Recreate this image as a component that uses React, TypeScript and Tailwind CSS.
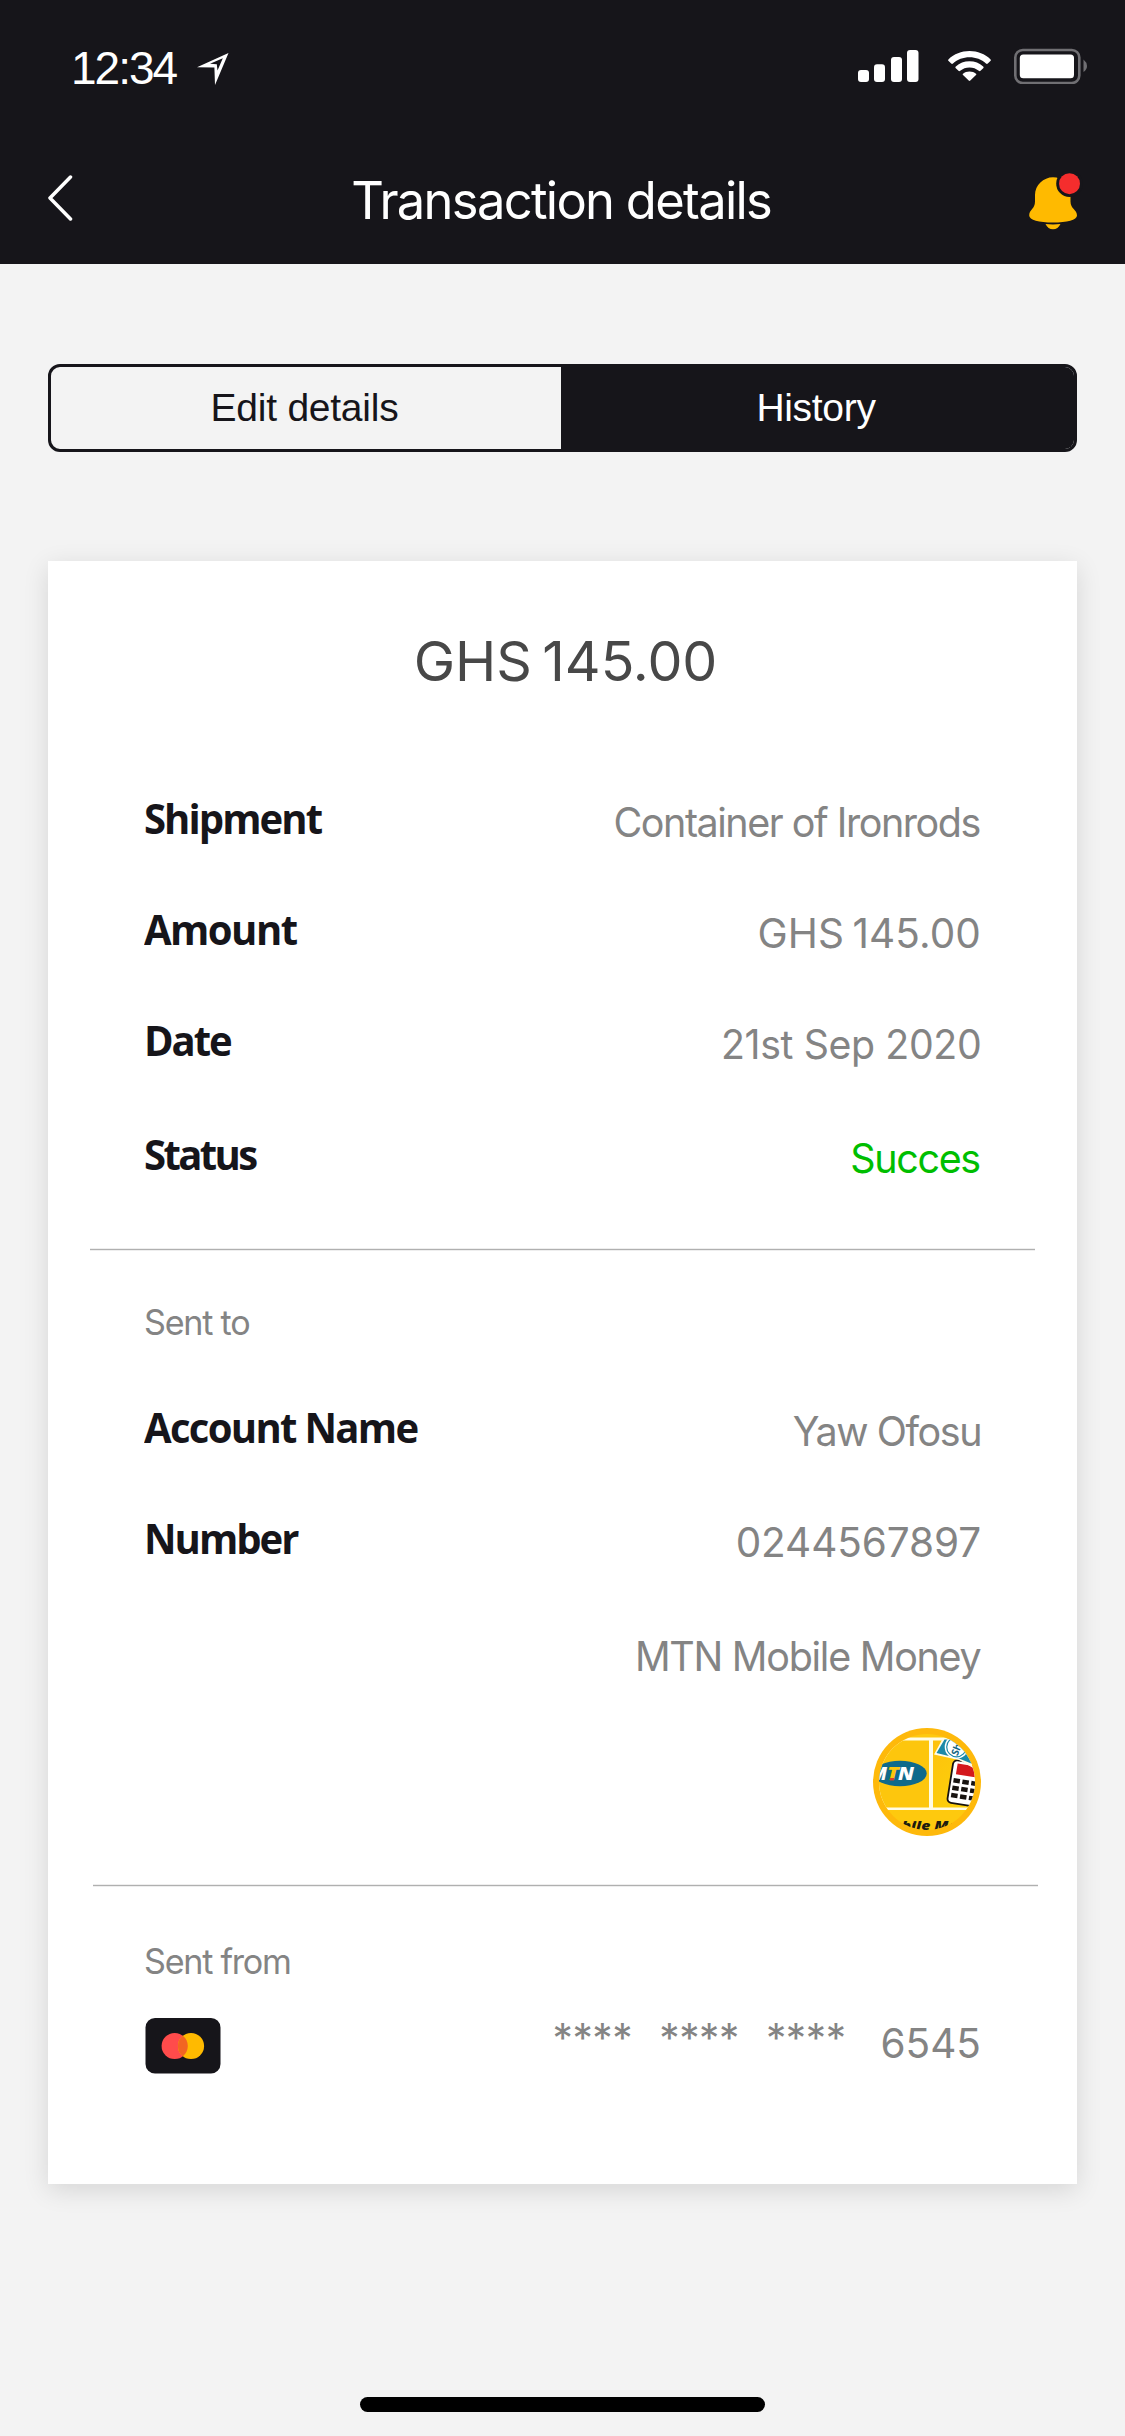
import React from "react";

type RowProps = {
  label?: string;
  value: string;
  labelClass?: string;
  valueClass?: string;
  className?: string;
};

function Row({ label = "", value, labelClass = "", valueClass = "", className = "" }: RowProps) {
  return (
    <div className={`flex h-[52px] items-start justify-between whitespace-nowrap ${className}`}>
      <span className={`origin-left scale-x-[0.97] font-['Open_Sans','Noto_Sans',sans-serif] text-[41.3px] leading-[49px] font-bold text-[#16151a] ${labelClass}`}>
        {label}
      </span>
      <span className={`mt-[5px] origin-right text-[40.5px] leading-[48px] ${valueClass}`}>{value}</span>
    </div>
  );
}

function LocationIcon() {
  return (
    <svg className="mt-3 ml-[21px] h-8 w-8" viewBox="0 0 32 32">
      <path d="M0 14.2 L31.5 0 L18 32 L17.4 14.6 Z" fill="#fff" />
      <path d="M13 10.8 L25.8 5.3 L20.5 17.5 L19.8 11.2 Z" fill="#16151a" />
    </svg>
  );
}

function SignalIcon() {
  return (
    <svg className="h-8 w-[61px]" viewBox="0 0 61 32" fill="#fff">
      <rect x="0" y="20" width="11" height="12" rx="3" />
      <rect x="16" y="14.3" width="11" height="17.7" rx="3" />
      <rect x="33" y="7" width="11" height="25" rx="3" />
      <rect x="49" y="0" width="11.5" height="32" rx="3" />
    </svg>
  );
}

function WifiIcon() {
  return (
    <svg className="h-[30px] w-[43px]" viewBox="0 0 43 30" fill="#fff">
      <path d="M21.5 0 C29.6 0 37 3 42.4 8.2 C43 8.8 43 9.5 42.4 10.1 L39.8 12.6 C39.2 13.2 38.6 13.1 38 12.6 C33.6 8.5 27.8 6.3 21.5 6.3 C15.2 6.3 9.4 8.5 5 12.6 C4.4 13.1 3.8 13.2 3.2 12.6 L.6 10.1 C0 9.5 0 8.8 .6 8.2 C6 3 13.4 0 21.5 0Z" />
      <path d="M21.5 10.2 C26.8 10.2 31.5 12.1 35.2 15.4 C35.8 16 35.8 16.6 35.2 17.2 L32.5 19.8 C31.9 20.4 31.4 20.3 30.8 19.8 C28.2 17.6 25 16.4 21.5 16.4 C18 16.4 14.8 17.6 12.2 19.8 C11.6 20.3 11.1 20.4 10.5 19.8 L7.8 17.2 C7.2 16.6 7.2 16 7.8 15.4 C11.5 12.1 16.2 10.2 21.5 10.2Z" />
      <path d="M21.5 20.5 C24 20.5 26.3 21.3 28 22.7 C28.5 23.1 28.5 23.5 28 24 L22.3 29.6 C21.7 30.1 21.3 30.1 20.7 29.6 L15 24 C14.5 23.5 14.5 23.1 15 22.7 C16.7 21.3 19 20.5 21.5 20.5Z" />
    </svg>
  );
}

function BatteryIcon() {
  return (
    <svg className="-mt-[2px] h-9 w-[73px]" viewBox="0 0 73 36">
      <rect x="1.3" y="2" width="64" height="33" rx="7.5" fill="none" stroke="#706f73" strokeWidth="2.6" />
      <rect x="5.8" y="6.5" width="54.2" height="23.8" rx="3.5" fill="#fff" />
      <path d="M69.5 11.5 Q73 14.5 73 17.9 Q73 21.3 69.5 24 Z" fill="#706f73" />
    </svg>
  );
}

function BellIcon() {
  return (
    <svg className="h-[62px] w-[56px]" viewBox="0 0 56 62">
      <path d="M24 9.2 C33.2 9.2 41.5 17 41.5 27 V33.5 C41.5 41 48 41.5 48 47.5 C48 52 38 54.5 24 54.5 C10 54.5 .2 52 .2 47.5 C.2 41.5 6 41 6 33.5 V27 C6 17 14.5 9.2 24 9.2Z" fill="#ffba00" />
      <path d="M16.5 56 Q24 56.9 31.5 56 C29.8 59.6 27.4 61.3 24 61.3 C20.6 61.3 18.2 59.6 16.5 56Z" fill="#ffba00" />
      <circle cx="40.5" cy="15.7" r="13.3" fill="#16151a" />
      <circle cx="40.5" cy="15.7" r="10.5" fill="#f52d2d" />
    </svg>
  );
}

function MtnLogo() {
  return (
    <svg className="h-[108px] w-[108px]" viewBox="0 0 108 108">
      <defs>
        <clipPath id="mtn-clip">
          <circle cx="54" cy="54" r="48" />
        </clipPath>
        <linearGradient id="mtn-gold" x1="0" y1="0" x2="1" y2="1">
          <stop offset="0" stopColor="#fdc20c" />
          <stop offset="1" stopColor="#fdd40a" />
        </linearGradient>
      </defs>
      <circle cx="54" cy="54" r="54" fill="#feb90b" />
      <g clipPath="url(#mtn-clip)">
        <rect width="108" height="108" fill="#fec90e" />
        <rect x="0" y="9.5" width="108" height="72.5" fill="#fffce6" />
        <rect x="0" y="12.5" width="56" height="67" fill="#fdc60d" />
        <rect x="60" y="12.5" width="48" height="67" fill="url(#mtn-gold)" />
        <ellipse cx="27" cy="45.5" rx="26.7" ry="12.8" fill="#0f6a8b" />
        <g fontFamily="'Open Sans', sans-serif" fontWeight="800" fontStyle="italic" fontSize="17">
          <text x="-2" y="51.7" fill="#fff" textLength="16" lengthAdjust="spacingAndGlyphs">M</text>
          <text x="14" y="51.7" fill="#fdc60d" textLength="12" lengthAdjust="spacingAndGlyphs">T</text>
          <text x="25" y="51.7" fill="#fff" textLength="16" lengthAdjust="spacingAndGlyphs">N</text>
        </g>
        <path d="M17 50 h4 v2.5 h-4z" fill="#d8402a" />
        <g transform="translate(82 33) rotate(9)">
          <rect x="-1.5" y="-1" width="34" height="43" rx="4" fill="#fff" stroke="#171310" strokeWidth="1.8" />
          <rect x="3" y="2" width="28" height="11" fill="#d4181c" />
          <g fill="#171310">
            <rect x="1.5" y="17" width="6.5" height="4.5" />
            <rect x="10.5" y="17" width="6.5" height="4.5" />
            <rect x="19.5" y="17" width="6.5" height="4.5" />
            <rect x="1.5" y="24.5" width="6.5" height="4.5" />
            <rect x="10.5" y="24.5" width="6.5" height="4.5" />
            <rect x="19.5" y="24.5" width="6.5" height="4.5" />
            <rect x="1.5" y="32" width="6.5" height="4.5" />
            <rect x="10.5" y="32" width="6.5" height="4.5" />
            <rect x="19.5" y="32" width="6.5" height="4.5" />
          </g>
        </g>
        <path d="M61 26.5 L70 10 L100 16 L104 42 L86 32 Z" fill="#fffce6" />
        <path d="M63.5 25 L71.5 11.5 L92 12 L102 37 L86 30.5 Z" fill="#1b89a8" />
        <circle cx="83.5" cy="19" r="11.8" fill="#fff" />
        <circle cx="83.5" cy="19" r="9.8" fill="none" stroke="#1b89a8" strokeWidth="1.2" />
        <text x="-6" y="4.5" transform="translate(82.5 21) rotate(-68)" fontFamily="'Open Sans', sans-serif" fontWeight="700" fontSize="10" fill="#12657f">Sh</text>
        <text x="19" y="101.5" fontFamily="'Open Sans', sans-serif" fontWeight="800" fontStyle="italic" fontSize="12.5" fill="#1d1a10" textLength="66" lengthAdjust="spacingAndGlyphs">obile Mo</text>
      </g>
    </svg>
  );
}

function CardIcon() {
  return (
    <svg className="ml-[1px] h-14 w-[76px]" viewBox="0 0 76 56">
      <rect x=".5" y="0" width="75" height="55.6" rx="9.5" fill="#16151a" />
      <circle cx="29.7" cy="28" r="13.1" fill="#ff4b4b" />
      <circle cx="46" cy="28" r="13.1" fill="#ffba00" />
      <path d="M37.85 17.75 A13.1 13.1 0 0 1 37.85 38.25 A13.1 13.1 0 0 1 37.85 17.75Z" fill="#f26522" />
    </svg>
  );
}

export default function App() {
  return (
    <div className="flex h-[2436px] w-[1125px] flex-col bg-[#f3f3f3] font-[Inter,sans-serif]">
      <header className="h-[264px] bg-[#16151a] text-white">
        <div className="flex h-[168px] items-start justify-between pt-[41px] pr-[38px] pl-[71px]">
          <div className="flex items-start">
            <span className="font-['Liberation_Sans',sans-serif] text-[46px] leading-[54px] tracking-[-2px]">12:34</span>
            <LocationIcon />
          </div>
          <div className="mt-[9px] flex items-start gap-[29px]">
            <SignalIcon />
            <div className="mt-px mr-[-6px] flex">
              <WifiIcon />
            </div>
            <BatteryIcon />
          </div>
        </div>
        <div className="flex items-start pr-10 pl-12">
          <svg className="mt-[7px] h-[46px] w-[25px]" viewBox="0 0 25 46" fill="none" stroke="#fff" strokeWidth="3.5" strokeLinecap="round" strokeLinejoin="round">
            <path d="M22.5 2 L2 23 L22.5 44" />
          </svg>
          <h1 className="mt-px flex-1 scale-x-[0.975] pl-[21px] text-center text-[52px] leading-[64px] font-normal tracking-[-1.75px]">Transaction details</h1>
          <BellIcon />
        </div>
      </header>

      <main className="flex flex-1 flex-col px-12 pt-[100px]">
        <div className="flex h-[88px] overflow-hidden rounded-[12px] border-[3px] border-[#16151a] font-['Liberation_Sans',sans-serif] text-[39px] leading-[82px]">
          <button className="h-full w-[510px] pr-[3px] tracking-[-0.25px] text-[#16151a]">Edit details</button>
          <button className="h-full flex-1 bg-[#16151a] pr-[3px] tracking-[-0.3px] text-white">History</button>
        </div>

        <section className="mt-[109px] flex h-[1623px] flex-col bg-white px-24 pt-[66px] text-[#848484] shadow-[0_6px_24px_rgba(0,0,0,0.12)]">
          <p className="pl-[6px] text-center text-[55.5px] leading-[68px] tracking-[-0.05px] text-[#484848] [word-spacing:-5px]">GHS 145.00</p>

          <Row className="mt-[99px]" label="Shipment" value="Container of Ironrods" labelClass="tracking-[-2px]" valueClass="pr-px scale-x-[0.975] tracking-[-1.5px]" />
          <Row className="mt-[59px]" label="Amount" value="GHS 145.00" labelClass="tracking-[-1.6px]" valueClass="tracking-[0.1px] [word-spacing:-3px]" />
          <Row className="mt-[59px]" label="Date" value="21st Sep 2020" labelClass="tracking-[-2.1px]" valueClass="scale-x-[0.97] tracking-[-0.4px]" />
          <Row className="mt-[62px]" label="Status" value="Succes" labelClass="tracking-[-2.7px]" valueClass="pr-px scale-x-[0.975] tracking-[-1.4px]  text-[#00be00]" />

          <hr className="-mx-[54px] mt-[66px] h-[3px] border-y border-[#eeeeee] bg-[#b0b0b0]" />

          <p className="mt-[50px] origin-left scale-x-[0.975] text-[35px] leading-[42px] tracking-[-1.25px]">Sent to</p>
          <Row className="mt-[60px]" label="Account Name" value="Yaw Ofosu" labelClass="tracking-[-1.75px]" valueClass="scale-x-[0.975] tracking-[-1.45px]" />
          <Row className="mt-[59px]" label="Number" value="0244567897" labelClass="tracking-[-2.05px]" valueClass="tracking-[-0.1px]" />
          <Row className="mt-[62px]" value="MTN Mobile Money" valueClass="pr-px scale-x-[0.975] tracking-[-1.3px]" />
          <div className="mt-12 flex justify-end">
            <MtnLogo />
          </div>

          <hr className="-mr-[57px] -ml-[51px] mt-12 h-[3px] border-y border-[#eeeeee] bg-[#b0b0b0]" />

          <p className="mt-[53px] origin-left scale-x-[0.975] text-[35px] leading-[42px] tracking-[-1.3px]">Sent from</p>
          <div className="mt-9 flex items-start justify-between">
            <CardIcon />
            <div className="mt-[2px] flex text-[40.5px] leading-[48px]">
              <span className="-mt-[5px] w-[106.7px] tracking-[-0.4px]">****</span>
              <span className="-mt-[5px] w-[106.7px] tracking-[-0.4px]">****</span>
              <span className="-mt-[5px] w-[114.5px] tracking-[-0.4px]">****</span>
              <span>6545</span>
            </div>
          </div>
        </section>
      </main>

      <div className="mx-auto mb-6 h-[15px] w-[405px] shrink-0 rounded-full bg-black" />
    </div>
  );
}
